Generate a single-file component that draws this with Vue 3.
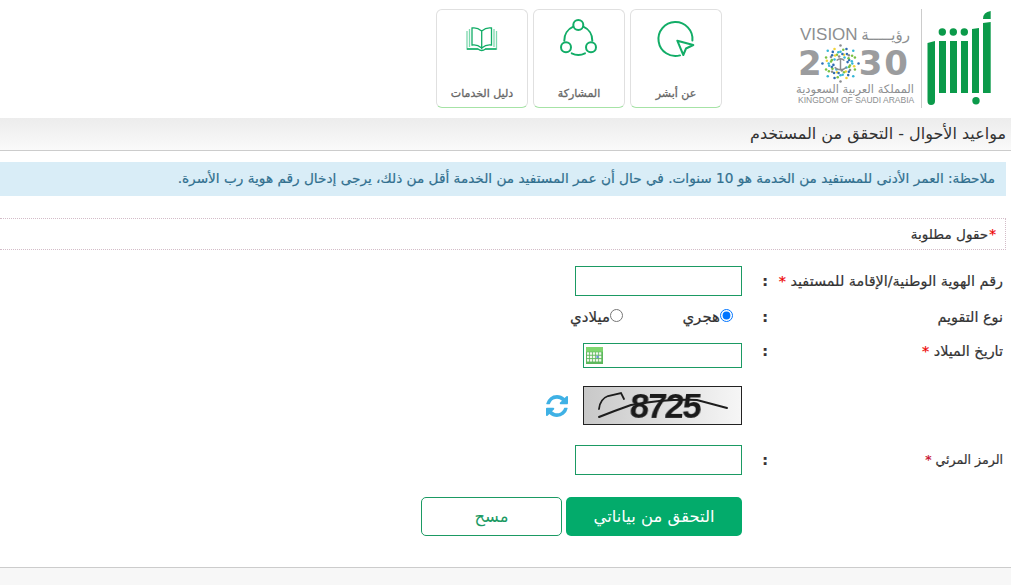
<script setup>
const cards = [
  { label: 'عن أبشر', icon: 'about' },
  { label: 'المشاركة', icon: 'share' },
  { label: 'دليل الخدمات', icon: 'guide' }
]

// rosette dots of the 2030 logo
const palette = ['#2e6db4', '#7ac143', '#35b6d6', '#f2d43a', '#8a8d8f', '#2e6db4', '#35b6d6', '#7ac143']
const dots = []
for (let r = 0; r < 4; r++) {
  const n = 16
  for (let i = 0; i < n; i++) {
    const a = (i / n) * Math.PI * 2 + (r % 2) * 0.2
    const spike = i % 2 === 0 ? 2.5 : 0
    const rad = 14 + spike - r * 2.2 + (r === 0 ? 2 : 0)
    dots.push({
      x: 20 + Math.cos(a) * rad,
      y: 20 + Math.sin(a) * rad,
      c: palette[(i + r * 3) % palette.length]
    })
  }
}
</script>

<template>
  <div class="page" dir="rtl">
    <header class="top">
      <svg class="absher" width="70" height="98" viewBox="0 0 70 98">
        <g fill="#0b9a4a">
          <path d="M58 9 Q58 2 65.700 1 V9Z" />
          <path d="M58 13 L65.700 12 V83 H58Z" />
          <path d="M47 19 L54 18 V83 H47Z" />
          <rect x="36" y="31" width="7" height="52" />
          <rect x="25" y="31" width="7" height="52" />
          <rect x="14" y="31" width="7" height="52" />
          <path d="M2.500 33 L10 31 V91 Q10 95 6 95 Q2.500 95 2.500 91Z" />
          <circle cx="17.300" cy="22" r="3.700" />
          <circle cx="28.300" cy="22" r="3.700" />
          <circle cx="39.300" cy="22" r="3.700" />
          <circle cx="51" cy="90.700" r="3.700" />
        </g>
      </svg>
      <div class="divider"></div>
      <div class="vision">
        <div class="vision-top" dir="ltr"><span>VISION</span><span class="ru" dir="rtl">رؤيـــــة</span></div>
        <div class="year" dir="ltr">
          <span class="two">2</span>
          <svg width="39" height="39" viewBox="0 0 40 40">
            <circle v-for="(d, i) in dots" :key="i" :cx="d.x" :cy="d.y" r="1.300" :fill="d.c" />
            <path d="M14 24 Q20 29 26 24 M20 15 V26 M16 17 Q20 13 24 17" stroke="#8a8d8f" stroke-width="1.500" fill="none" />
          </svg>
          <span class="rest">30</span>
        </div>
        <div class="vision-ar">المملكة العربية السعودية</div>
        <div class="vision-en" dir="ltr">KINGDOM OF SAUDI ARABIA</div>
      </div>
      <nav class="cards">
        <a v-for="c in cards" :key="c.icon" class="card">
          <svg v-if="c.icon === 'about'" class="icon" width="42" height="42" viewBox="0 0 42 42" fill="none" stroke="#12ad67" stroke-width="2">
            <path d="M25 37.400 A17 17 0 1 1 37.400 22.500" stroke-linecap="round" />
            <path d="M22.300 22.700 L38.300 27 L31 30.500 L28.300 37Z" stroke-linejoin="round" />
          </svg>
          <svg v-else-if="c.icon === 'share'" class="icon" width="42" height="42" viewBox="0 0 42 42" fill="none" stroke="#12ad67" stroke-width="2">
            <circle cx="20.300" cy="7" r="5" />
            <circle cx="8" cy="29.300" r="5" />
            <circle cx="33" cy="29.300" r="5" />
            <path d="M6.300 22.700 A15 15 0 0 1 15.300 8.700 M34.300 22.700 A15 15 0 0 0 25.300 8.700 M13.700 35.300 A15 15 0 0 0 27 35.300" stroke-linecap="round" />
          </svg>
          <svg v-else class="icon" width="42" height="42" viewBox="0 0 42 42" fill="none" stroke="#12ad67" stroke-width="1.300">
            <path d="M6 13 V31 H17 M35.500 13 V31 H24" stroke="#7ed8ae" />
            <path d="M8.500 11 V29 M33 11 V29" stroke="#7ed8ae" />
            <path d="M11 10 Q16 9 20.700 13 V30 Q16 26 11 27Z M30.500 10 Q25.500 9 20.700 13 V30 Q25.500 26 30.500 27Z" fill="#fff" />
            <path d="M6 31 H17 Q20.700 34 24.500 31 H35.500" />
          </svg>
          <span class="card-label">{{ c.label }}</span>
        </a>
      </nav>
    </header>

    <div class="title">مواعيد الأحوال - التحقق من المستخدم</div>

    <div class="note">ملاحظة: العمر الأدنى للمستفيد من الخدمة هو 10 سنوات. في حال أن عمر المستفيد من الخدمة أقل من ذلك، يرجى إدخال رقم هوية رب الأسرة.</div>

    <div class="required"><span class="star">*</span>حقول مطلوبة</div>

    <form class="form" @submit.prevent>
      <div class="row r1">
        <label class="lbl">رقم الهوية الوطنية/الإقامة للمستفيد <span class="star2">*</span></label>
        <span class="colon">:</span>
        <div class="field"><input class="inp wide" type="text" /></div>
      </div>

      <div class="row r2">
        <label class="lbl">نوع التقويم</label>
        <span class="colon">:</span>
        <div class="field radios">
          <label class="radio hijri"><input type="radio" name="cal" checked />هجري</label>
          <label class="radio"><input type="radio" name="cal" />ميلادي</label>
        </div>
      </div>

      <div class="row r3">
        <label class="lbl">تاريخ الميلاد <span class="star2">*</span></label>
        <span class="colon">:</span>
        <div class="field">
          <div class="date">
            <svg class="cal" width="17" height="17" viewBox="0 0 18 18">
              <rect width="18" height="18" fill="#5cb85c" />
              <rect x="0" y="0" width="18" height="5" fill="#7fd66f" />
              <g fill="#f2f7ec">
                <template v-for="y in 3" :key="y">
                  <rect v-for="x in 5" :key="x" :x="x * 3.2 - 2.2" :y="y * 3.6 + 2" width="2.400" height="2.600" />
                </template>
              </g>
              <rect x="11" y="9.200" width="2.400" height="2.600" fill="#6f8fe0" />
            </svg>
          </div>
        </div>
      </div>

      <div class="row r4">
        <span class="lbl"></span>
        <span class="colon"></span>
        <div class="field captcha-wrap">
          <div class="captcha">
            <span class="code" dir="ltr">8725</span>
            <svg class="scratch" width="157" height="37" viewBox="0 0 157 37" fill="none" stroke="#1d1d1d" stroke-linecap="round">
              <path d="M15 30 Q30 24 47 18 Q80 12 113 13 L143 21" stroke-width="2" />
              <path d="M15 22 Q16 12 24 9 L37 6 L40 12" stroke-width="1.800" />
            </svg>
          </div>
          <svg class="refresh" width="22" height="22" viewBox="0 0 1536 1536">
            <path fill="#3fb1e5" d="M1511 928q0 5-1 7-64 268-268 434.500t-478 166.500q-146 0-282.500-55t-243.500-157l-129 129q-19 19-45 19t-45-19-19-45v-448q0-26 19-45t45-19h448q26 0 45 19t19 45-19 45l-137 137q71 66 161 102t187 36q134 0 250-65t186-179q11-17 53-117 8-23 30-23h192q13 0 22.500 9.500t9.500 22.500zm25-800v448q0 26-19 45t-45 19h-448q-26 0-45-19t-19-45 19-45l138-138q-148-137-349-137-134 0-250 65t-186 179q-11 17-53 117-8 23-30 23h-199q-13 0-22.500-9.500t-9.500-22.500v-7q65-268 270-434.500t480-166.500q146 0 284 55.500t245 156.500l130-129q19-19 45-19t45 19 19 45z" />
          </svg>
        </div>
      </div>

      <div class="row r5">
        <label class="lbl">الرمز المرئي <span class="star3">*</span></label>
        <span class="colon">:</span>
        <div class="field"><input class="inp wide code-inp" type="text" /></div>
      </div>

      <div class="actions">
        <button class="btn primary" type="submit">التحقق من بياناتي</button>
        <button class="btn ghost" type="reset">مسح</button>
      </div>
    </form>

    <footer class="foot"></footer>
  </div>
</template>

<style>
html, body { margin: 0; background: #fff; }
</style>

<style scoped>
.page {
  width: 1011px;
  height: 585px;
  overflow: hidden;
  position: relative;
  font-family: "DejaVu Sans", "Noto Sans", sans-serif;
  color: #333;
  display: flex;
  flex-direction: column;
  -webkit-text-stroke: 0.2px;
}

/* header */
.top {
  height: 118px;
  box-sizing: border-box;
  display: flex;
  align-items: flex-start;
  padding: 9px 16px 0 0;
  flex: none;
}
.absher {
  margin-top: 1px;
  margin-left: 3px;
}
.divider {
  width: 1px;
  height: 99px;
  background: #ccc;
  margin-left: 7px;
}
.vision {
  width: 116px;
  padding-top: 17px;
  color: #8d8f91;
  margin-left: 76px;
  -webkit-text-stroke: 0;
}
.vision-top {
  display: flex;
  justify-content: space-between;
  padding: 0 4px 0 2px;
  font-size: 17px;
  line-height: 18px;
  font-family: "Liberation Sans", sans-serif;
}
.ru { font-size: 15px; font-family: "DejaVu Sans", sans-serif; }
.year {
  display: flex;
  align-items: center;
  font: 700 34px/39px "DejaVu Sans", sans-serif;
  height: 39px;
  color: #9b9c9e;
}
.two { margin: 0 -1px 0 0; }
.rest { letter-spacing: 2px; margin-left: -1px; white-space: nowrap; }
.vision-ar {
  font-size: 11.500px;
  line-height: 12px;
  height: 12px;
  text-align: right;
  white-space: nowrap;
}
.vision-en {
  font: 8.500px/10px "Liberation Sans", sans-serif;
  white-space: nowrap;
}
.cards {
  display: flex;
  gap: 5px;
}
.card {
  width: 92px;
  height: 99px;
  box-sizing: border-box;
  border: 1px solid #e0e0e0;
  border-bottom-color: #a6e3a6;
  border-radius: 6px;
  display: flex;
  flex-direction: column;
  align-items: center;
  padding-top: 8px;
}
.icon { flex: none; }
.card-label {
  margin-top: auto;
  padding-bottom: 5px;
  font-size: 11px;
  line-height: 16px;
  color: #666;
  -webkit-text-stroke: 0.3px;
}

/* title */
.title {
  height: 33px;
  box-sizing: border-box;
  flex: none;
  padding-right: 5px;
  background: linear-gradient(#ececec, #fafafa);
  border-bottom: 1px solid #ccc;
  font-size: 16px;
  line-height: 31px;
  color: #333;
  -webkit-text-stroke: 0;
}
.note {
  height: 34px;
  flex: none;
  box-sizing: border-box;
  margin: 11px 5px 0 0;
  padding-right: 11px;
  background: #d9edf7;
  color: #31708f;
  font-size: 13.650px;
  line-height: 32px;
  white-space: nowrap;
  overflow: hidden;
}
.required {
  height: 32px;
  flex: none;
  box-sizing: border-box;
  margin: 22px 5px 0 0;
  padding-right: 9px;
  border: 1px dotted #d3bcc8;
  border-left: 0;
  font-size: 13.600px;
  line-height: 30px;
}
.star { color: #e00; margin-left: 1px; }

/* form */
.form {
  flex: 1;
  display: flex;
  flex-direction: column;
}
.row {
  display: grid;
  grid-template-columns: 235px 34px 1fr;
  align-items: center;
  font-size: 14.400px;
}
.r1 { margin-top: 16px; height: 30px; }
.r2 { margin-top: 10px; height: 22px; }
.r3 { margin-top: 15px; height: 25px; align-items: start; }
.r4 { margin-top: 18px; height: 39px; }
.r5 { margin-top: 20px; height: 30px; }
.r5 .lbl { font-size: 12.600px; position: relative; top: -1px; }
.lbl {
  padding-right: 8px;
  white-space: nowrap;
}
.star2 { color: #e00; }
.star3 { color: #c8102e; }
.colon { text-align: right; padding-right: 8px; font-weight: 700; }
.field { display: flex; align-items: center; }
.inp {
  box-sizing: border-box;
  height: 30px;
  background: #fff;
  outline: none;
  border: 1px solid #1b9a63;
  border-radius: 0;
  padding: 0 4px;
}
.wide { width: 167px; }

.radios { gap: 0; }
.radio {
  display: flex;
  align-items: center;
  font-size: 15px;
  color: #333;
  width: 110px;
}
.radio input {
  margin: 0;
  width: 13px;
  height: 13px;
  position: relative;
  top: -2px;
}
.hijri { margin-right: 9px; }

.date {
  box-sizing: border-box;
  width: 159px;
  height: 25px;
  border: 1px solid #1b9a63;
  display: flex;
  justify-content: flex-end;
  align-items: center;
  padding-left: 2px;
}
.captcha-wrap { gap: 15px; }
.captcha {
  box-sizing: border-box;
  position: relative;
  width: 159px;
  height: 39px;
  border: 1px solid #222;
  background: linear-gradient(to right, #c8c8c8, #f6f6f6);
  overflow: hidden;
}
.scratch { position: absolute; inset: 0; }
.code {
  position: absolute;
  left: 46px;
  top: 1px;
  font: 700 35px/36px "Liberation Sans", sans-serif;
  letter-spacing: -2px;
  color: #1a1a1a;
  filter: blur(0.6px);
  transform: skewX(-5deg);
  -webkit-text-stroke: 0;
}
.refresh { flex: none; }

.actions {
  display: flex;
  margin-top: 22px;
  margin-right: 269px;
  gap: 4px;
}
.btn {
  box-sizing: border-box;
  height: 39px;
  font-family: "DejaVu Sans", sans-serif;
  font-size: 16.400px;
  border-radius: 5px;
  padding: 0;
  -webkit-text-stroke: 0;
}
.primary {
  width: 176px;
  background: #03ab6b;
  border: 0;
  color: #fff;
}
.ghost {
  width: 141px;
  background: #fff;
  border: 1px solid #1b9a63;
  color: #1b9a63;
}
.foot {
  position: absolute;
  left: 0;
  right: 0;
  bottom: 0;
  height: 18px;
  box-sizing: border-box;
  background: #f7f7f7;
  border-top: 1px solid #ccc;
}
</style>
